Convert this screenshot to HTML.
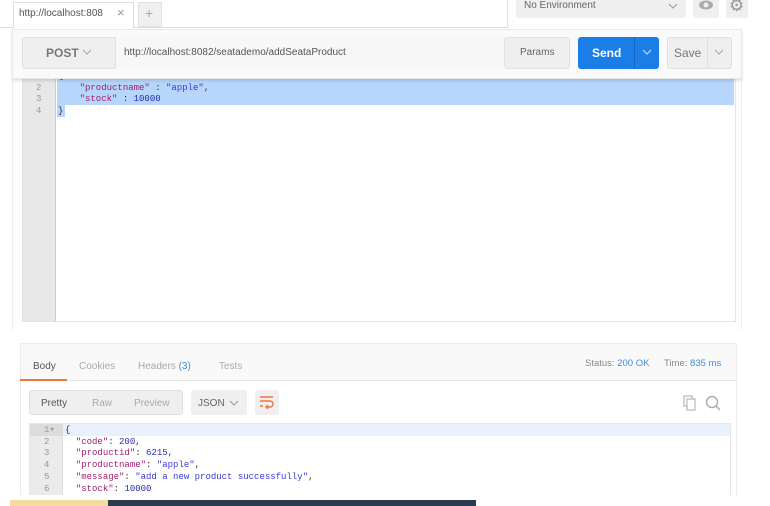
<!DOCTYPE html>
<html><head><meta charset="utf-8"><style>
*{box-sizing:border-box;margin:0;padding:0}
body{width:770px;height:506px;background:#fff;position:relative;overflow:hidden;font-family:"Liberation Sans",sans-serif;font-size:11px;color:#505050}
.a{position:absolute}
.mono{font-family:"Liberation Mono",monospace;font-size:9px;line-height:11.7px;white-space:pre}
.k{color:#a11d6e}.s{color:#3a3ad6}.n{color:#2a2ab0}
</style></head><body>
<!-- top tabs -->
<div class="a" style="left:0;top:27px;width:508px;height:1px;background:#ddd"></div>
<div class="a" style="left:13px;top:2px;width:121px;height:26px;background:#fff;border:1px solid #ddd;border-bottom:none"></div>
<div class="a" style="left:19px;top:8px;font-size:10px;color:#555">http://localhost:808</div>
<div class="a" style="left:117px;top:5px;font-size:13px;color:#999">×</div>
<div class="a" style="left:138px;top:2px;width:24px;height:25px;background:#f0f0f0;border:1px solid #e2e2e2"></div>
<div class="a" style="left:145px;top:5px;font-size:14px;color:#aaa">+</div>
<div class="a" style="left:507px;top:0;width:1px;height:28px;background:#e2e2e2"></div>
<div class="a" style="left:516px;top:0;width:170px;height:18px;background:#efefef;border-radius:0 0 3px 3px"></div>
<div class="a" style="left:524px;top:0;font-size:10px;color:#666">No Environment</div>
<svg class="a" style="left:668px;top:3px" width="10" height="7"><path d="M1 1L5 5L9 1" stroke="#999" fill="none"/></svg>
<div class="a" style="left:693px;top:0;width:26px;height:18px;background:#efefef;border-radius:0 0 3px 3px"></div>
<svg class="a" style="left:698px;top:0" width="16" height="12"><ellipse cx="8" cy="5" rx="7" ry="4.5" fill="#aaa"/><circle cx="8" cy="5" r="2.5" fill="#efefef"/></svg>
<div class="a" style="left:726px;top:0;width:22px;height:18px;background:#efefef"></div>
<div class="a" style="left:729px;top:-4px;font-size:17px;color:#999">⚙</div>
<!-- editor panel -->
<div class="a" style="left:12px;top:28px;width:730px;height:302px;border-left:1px solid #eee;border-right:1px solid #eee"></div>
<div class="a" style="left:22px;top:70px;width:714px;height:252px;border:1px solid #e4e4e4;background:#fff"></div>
<div class="a" style="left:23px;top:71px;width:33px;height:250px;background:#e8e8e8;border-right:1px solid #ccc"></div>
<div class="a" style="left:57px;top:71px;width:677px;height:34px;background:#b7d6fb"></div>
<div class="a" style="left:57px;top:105px;width:8px;height:12px;background:#b7d6fb"></div>
<div class="a mono" style="left:36px;top:71px;color:#999">1
2
3
4</div>
<div class="a mono" style="left:58px;top:71px;color:#333">{
    <span class="k">"productname"</span> : <span class="s">"apple"</span>,
    <span class="k">"stock"</span> : <span class="n">10000</span>
}</div>
<!-- request bar -->
<div class="a" style="left:12px;top:29px;width:730px;height:50px;background:#fafafa;box-shadow:0 2px 3px rgba(0,0,0,.12);border:1px solid #e8e8e8"></div>
<div class="a" style="left:22px;top:37px;width:483px;height:32px;background:#efefef;border:1px solid #e2e2e2;border-radius:3px"></div>
<div class="a" style="left:115px;top:37px;width:390px;height:32px;background:#f7f7f7;border-left:1px solid #e2e2e2"></div>
<div class="a" style="left:46px;top:46px;font-size:12px;font-weight:bold;color:#777">POST</div>
<svg class="a" style="left:82px;top:49px" width="10" height="7"><path d="M1 1L5 5L9 1" stroke="#aaa" fill="none"/></svg>
<div class="a" style="left:124px;top:47px;font-size:10px;color:#555">http://localhost:8082/seatademo/addSeataProduct</div>
<div class="a" style="left:504px;top:37px;width:66px;height:32px;background:#efefef;border:1px solid #e2e2e2;border-radius:3px"></div>
<div class="a" style="left:520px;top:47px;font-size:10px;color:#666">Params</div>
<div class="a" style="left:578px;top:37px;width:81px;height:32px;background:#1b7ee6;border-radius:3px"></div>
<div class="a" style="left:634px;top:37px;width:1px;height:32px;background:#1566c0"></div>
<div class="a" style="left:592px;top:46px;font-size:12px;font-weight:bold;color:#fff">Send</div>
<svg class="a" style="left:642px;top:49px" width="10" height="7"><path d="M1 1L5 5L9 1" stroke="#cfe3fa" fill="none"/></svg>
<div class="a" style="left:667px;top:37px;width:65px;height:32px;background:#efefef;border:1px solid #e0e0e0;border-radius:3px"></div>
<div class="a" style="left:707px;top:37px;width:1px;height:32px;background:#e0e0e0"></div>
<div class="a" style="left:674px;top:46px;font-size:12px;color:#777">Save</div>
<svg class="a" style="left:714px;top:49px" width="10" height="7"><path d="M1 1L5 5L9 1" stroke="#aaa" fill="none"/></svg>
<!-- response -->
<div class="a" style="left:20px;top:343px;width:717px;height:152px;border:1px solid #ececec;border-bottom:none"></div>
<div class="a" style="left:21px;top:344px;width:715px;height:37px;background:#f9f9f9;border-bottom:1px solid #e6e6e6"></div>
<div class="a" style="left:33px;top:361px;font-size:10px;color:#555">Body</div>
<div class="a" style="left:79px;top:361px;font-size:10px;color:#aaa">Cookies</div>
<div class="a" style="left:138px;top:361px;font-size:10px;color:#aaa">Headers <span style="color:#3d8de0">(3)</span></div>
<div class="a" style="left:219px;top:361px;font-size:10px;color:#aaa">Tests</div>
<div class="a" style="left:20px;top:379px;width:47px;height:2px;background:#f0733a"></div>
<div class="a" style="left:585px;top:358px;font-size:9.5px;color:#888">Status: <span style="color:#3d8de0">200 OK</span></div>
<div class="a" style="left:664px;top:358px;font-size:9.5px;color:#888">Time: <span style="color:#3d8de0">835 ms</span></div>
<div class="a" style="left:29px;top:390px;width:154px;height:25px;background:#efefef;border:1px solid #e0e0e0;border-radius:3px"></div>
<div class="a" style="left:41px;top:398px;font-size:10px;color:#555">Pretty</div>
<div class="a" style="left:92px;top:398px;font-size:10px;color:#aaa">Raw</div>
<div class="a" style="left:134px;top:398px;font-size:10px;color:#aaa">Preview</div>
<div class="a" style="left:191px;top:390px;width:56px;height:25px;background:#efefef;border-radius:3px"></div>
<div class="a" style="left:198px;top:398px;font-size:10px;color:#666">JSON</div>
<svg class="a" style="left:229px;top:400px" width="10" height="7"><path d="M1 1L5 5L9 1" stroke="#999" fill="none"/></svg>
<div class="a" style="left:255px;top:390px;width:24px;height:25px;background:#efefef;border-radius:3px"></div>
<svg class="a" style="left:259px;top:395px" width="16" height="14"><path d="M1 2H14M1 6H11a3 3 0 0 1 0 6H7M9 10L7 12L9 14M1 11H4" stroke="#f0733a" stroke-width="1.4" fill="none"/></svg>
<svg class="a" style="left:683px;top:395px" width="14" height="16"><rect x="1" y="1" width="8" height="10" fill="none" stroke="#aaa"/><rect x="4" y="4" width="8" height="11" fill="#fff" stroke="#aaa"/></svg>
<svg class="a" style="left:705px;top:395px" width="16" height="16"><circle cx="7" cy="7" r="5.5" fill="none" stroke="#aaa" stroke-width="1.4"/><path d="M11 11L15 15" stroke="#aaa" stroke-width="1.5"/></svg>
<div class="a" style="left:29px;top:423px;width:702px;height:72px;border:1px solid #e6e6e6;border-bottom:none;background:#fff"></div>
<div class="a" style="left:30px;top:424px;width:33px;height:71px;background:#ebebeb;border-right:1px solid #ddd"></div>
<div class="a" style="left:63px;top:424px;width:667px;height:12px;background:#e8f1fd"></div>
<div class="a" style="left:30px;top:424px;width:33px;height:12px;background:#dcdcdc"></div>
<div class="a mono" style="left:44px;top:425px;color:#999">1▾
2
3
4
5
6</div>
<div class="a mono" style="left:65px;top:425px;color:#333">{
  <span class="k">"code"</span>: <span class="n">200</span>,
  <span class="k">"productid"</span>: <span class="n">6215</span>,
  <span class="k">"productname"</span>: <span class="s">"apple"</span>,
  <span class="k">"message"</span>: <span class="s">"add a new product successfully"</span>,
  <span class="k">"stock"</span>: <span class="n">10000</span></div>
<!-- taskbar -->
<div class="a" style="left:10px;top:500px;width:466px;height:6px;background:#293a52"></div>
<div class="a" style="left:10px;top:500px;width:98px;height:6px;background:#f4dca0"></div>
</body></html>
